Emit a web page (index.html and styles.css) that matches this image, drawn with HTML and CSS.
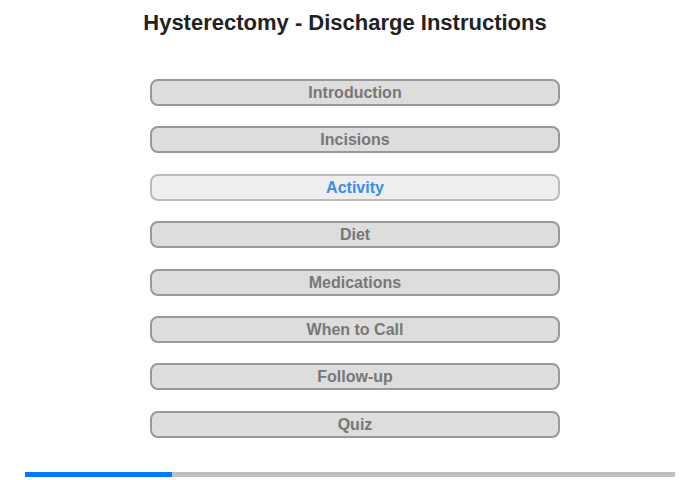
FILE: index.html
```html
<!DOCTYPE html>
<html>
<head>
  <meta charset="UTF-8">
  <title>Hysterectomy - Discharge Instructions</title>
  <link rel="stylesheet" href="styles.css">
</head>
<body>
  <div id="page">
    <h1 class="title">Hysterectomy - Discharge Instructions</h1>
    <div class="menu">
      <a href="javascript:;" class="item">Introduction</a>
      <a href="javascript:;" class="item">Incisions</a>
      <a href="javascript:;" class="item on">Activity</a>
      <a href="javascript:;" class="item">Diet</a>
      <a href="javascript:;" class="item">Medications</a>
      <a href="javascript:;" class="item">When to Call</a>
      <a href="javascript:;" class="item">Follow-up</a>
      <a href="javascript:;" class="item">Quiz</a>
    </div>
    <div class="progress">
      <div class="bar" style="width:22.6%;"></div>
    </div>
  </div>
</body>
</html>
```

FILE: styles.css
```css
* {
  margin: 0;
  padding: 0;
  box-sizing: border-box;
}
a {
  text-decoration: none;
}
body {
  font-family: "Liberation Sans", Arial, sans-serif;
  background: #fff;
}
#page {
  width: 700px;
  height: 480px;
  display: flex;
  flex-direction: column;
  align-items: center;
}
.title {
  margin-top: 10px;
  margin-right: 10px;
  font-size: 22px;
  line-height: 26px;
  color: #222;
  font-weight: bold;
}
.menu {
  margin-top: 43px;
  margin-left: 10px;
  display: flex;
  flex-direction: column;
  gap: 20.4px;
}
.menu .item {
  display: block;
  width: 410px;
  height: 27px;
  line-height: 23px;
  border: 2px solid #999;
  border-radius: 8px;
  background: #ddd;
  color: #777;
  font-size: 16px;
  font-weight: bold;
  text-align: center;
}
.menu .item.on {
  background: #eee;
  border-color: #bbb;
  color: #3a8ee6;
}
.progress {
  margin-top: auto;
  margin-bottom: 3px;
  width: 650px;
  height: 5px;
  background: #c0c0c0;
}
.progress .bar {
  height: 5px;
  background: #0078ff;
}
```
